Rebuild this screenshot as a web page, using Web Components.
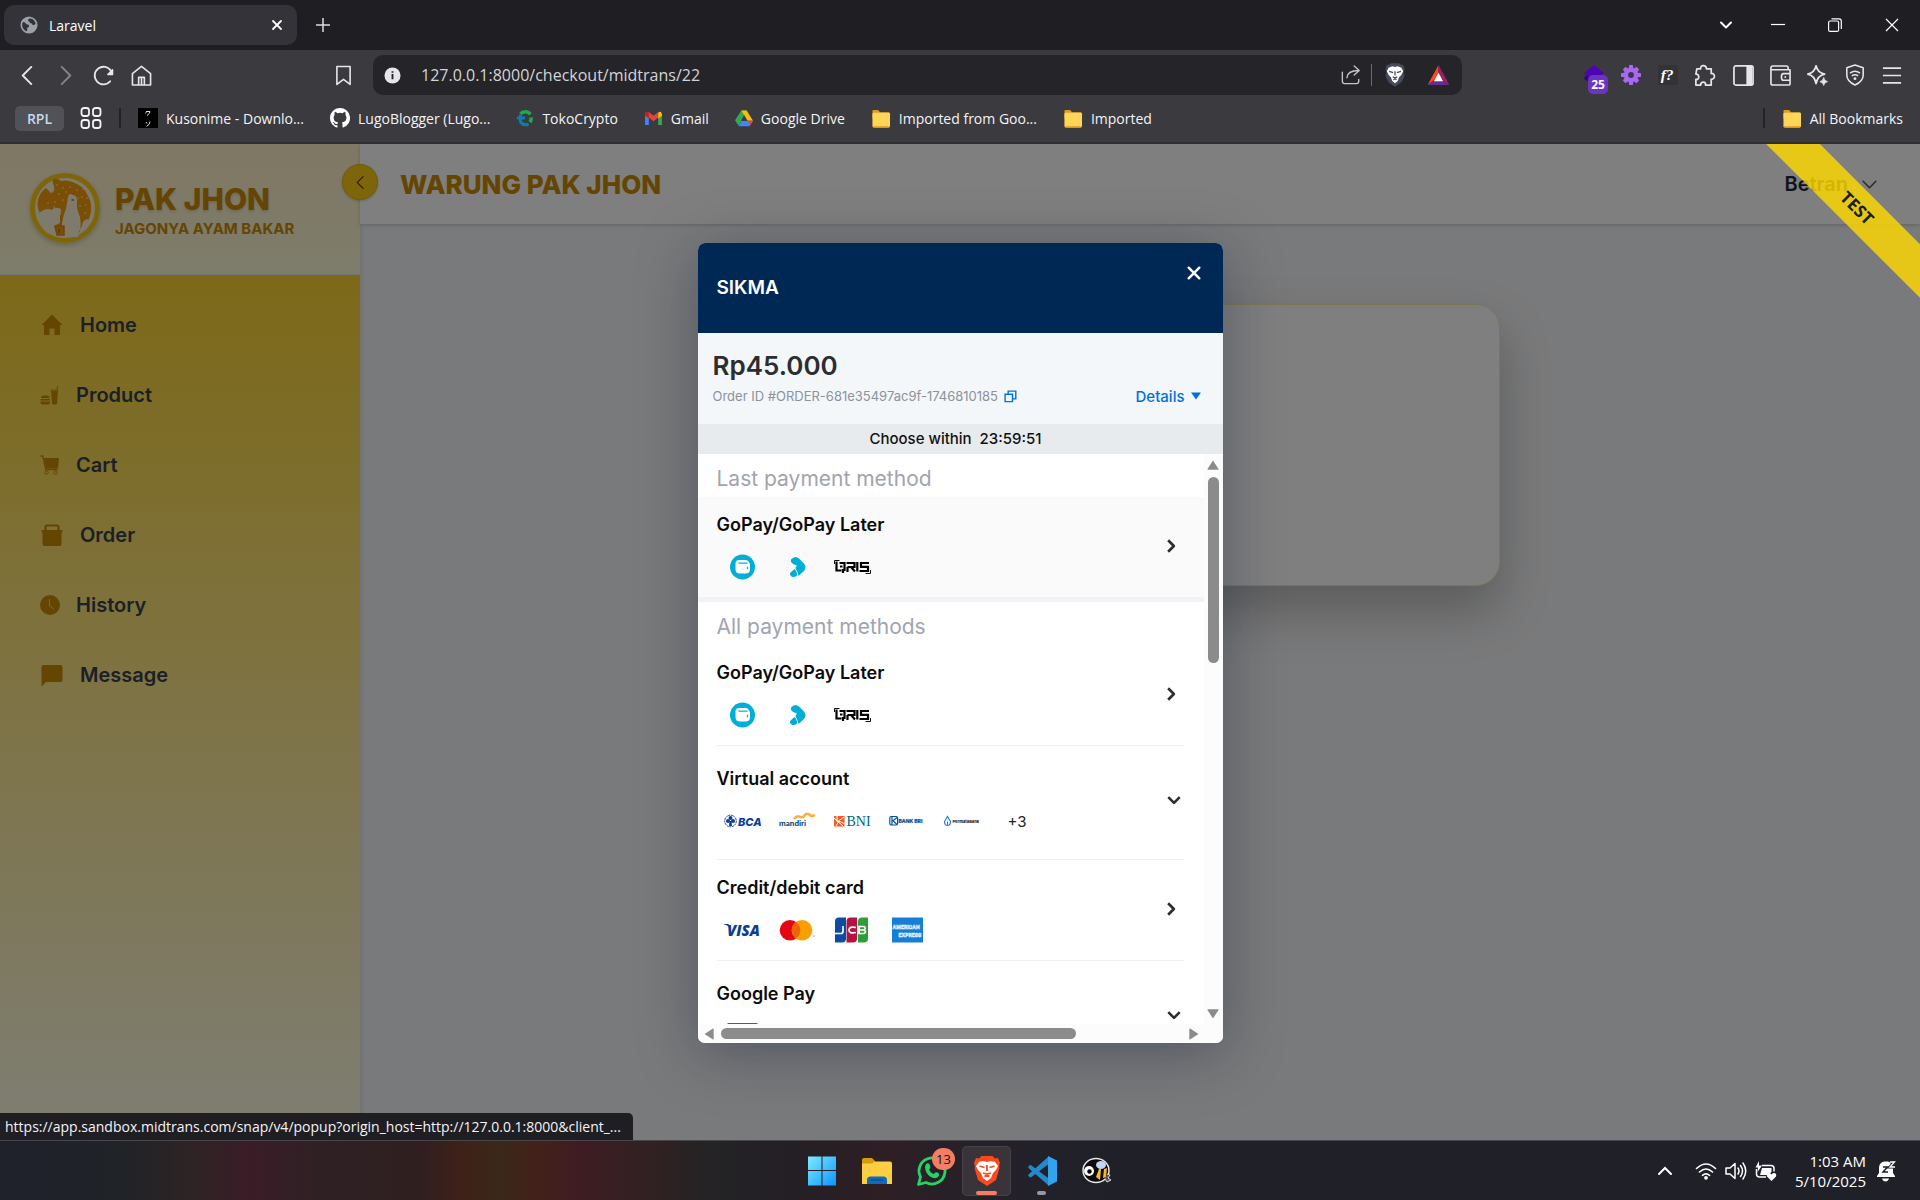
<!DOCTYPE html>
<html lang="en">
<head>
<meta charset="utf-8">
<title>Laravel</title>
<style>
  :root { --ui: "Open Sans", "Noto Sans", sans-serif; --brand: Inter, "Noto Sans", sans-serif; }
  html, body { margin: 0; height: 100%; overflow: hidden; }
  body { font-family: var(--ui); background: #1f1e23; }
</style>
</head>
<body>
<desktop-screen></desktop-screen>
<script>
const ICONS = {
  globe: ['0 0 20 20', '<circle cx="10" cy="10" r="9.500" fill="#9ba1a8"/><path d="M3 7c2-1 3 1 4 2s3 0 3 2-2 1-2 3 0 3-1 3C3 15 1.500 11 3 7zM10 3c-1 1-2 2 0 3s0 2 2 2 1 2 3 2 1-1 2.500-1C17 6 14 2 10 3z" fill="#34333a"/>'],
  close: ['0 0 12 12', '<path d="M2 2l8 8M10 2l-8 8" stroke="currentColor" stroke-width="1.800" stroke-linecap="round"/>'],
  thinclose: ['0 0 14 14', '<path d="M1 1l12 12M13 1L1 13" stroke="currentColor" stroke-width="1.200"/>'],
  plus: ['0 0 14 14', '<path d="M7 0v14M0 7h14" stroke="currentColor" stroke-width="1.500"/>'],
  chevdown: ['0 0 14 14', '<path d="M2 4.500l5 5 5-5" fill="none" stroke="currentColor" stroke-width="2" stroke-linecap="round" stroke-linejoin="round"/>'],
  chevthin: ['0 0 16 16', '<path d="M2 5l6 6 6-6" fill="none" stroke="currentColor" stroke-width="1.400" stroke-linecap="round" stroke-linejoin="round"/>'],
  minimize: ['0 0 14 14', '<path d="M0 6.500h14" stroke="currentColor" stroke-width="1.200"/>'],
  restore: ['0 0 14 14', '<rect x=".6" y="3" width="10" height="10.400" rx="1.500" fill="none" stroke="currentColor" stroke-width="1.200"/><path d="M3.500 .8H11q2.300 0 2.300 2.300V11" fill="none" stroke="currentColor" stroke-width="1.200"/>'],
  back: ['0 0 20 20', '<path d="M14 1L5 10l9 9" fill="none" stroke="currentColor" stroke-width="2" stroke-linecap="round" stroke-linejoin="round"/>'],
  forward: ['0 0 20 20', '<path d="M6 1l9 9-9 9" fill="none" stroke="currentColor" stroke-width="2" stroke-linecap="round" stroke-linejoin="round"/>'],
  reload: ['0 0 22 22', '<path d="M18 17A9.200 9.200 0 1 1 19 6.500" fill="none" stroke="currentColor" stroke-width="1.900" stroke-linecap="round"/><path d="M20.500 5v5h-5z" fill="currentColor" stroke="currentColor" stroke-width="1.500" stroke-linejoin="round"/>'],
  home: ['0 0 22 22', '<path d="M1.500 9L11 1.500 20.500 9v12H1.500z M8 21v-8h6v8M11 21v-8" fill="none" stroke="currentColor" stroke-width="1.700" stroke-linejoin="round"/>'],
  bookmark: ['0 0 18 22', '<path d="M2 1.500h14v19l-7-5.500-7 5.500z" fill="none" stroke="currentColor" stroke-width="1.700" stroke-linejoin="round"/>'],
  info: ['0 0 18 18', '<circle cx="9" cy="9" r="8.500" fill="#e6e5ea"/><path d="M9 7.500V13M9 4.500v1.600" stroke="#252429" stroke-width="2"/>'],
  share: ['0 0 22 22', '<path d="M1.500 8v10q0 2.500 2.500 2.500h13q2.500 0 2.500-2.500v-2M6.500 14q.5-8 13-8M14.500 1l5.500 5-5.500 5" fill="none" stroke="currentColor" stroke-width="1.500" stroke-linecap="round" stroke-linejoin="round"/>'],
  lion: ['0 0 22 26', '<path d="M6.500 0h9L17 1.500l3 .5 1.500 5-1 4 1 3L18 21l-7 5-7-5L.5 14l1-3-1-4L2 2l3-.5z" fill="#474a5f"/><path d="M4 5l4-1.500 3 .8 3-.8L18 5l2 4-2 4-2.500 2.500-1.500 4L11 22l-3-2.500-1.500-4L4 13 2 9z" fill="#fff"/><path d="M4.500 9l4.500 1.300M17.500 9L13 10.300M11 9v4.500M8.500 15l2.500 1 2.500-1M9.300 18.200L11 17l1.700 1.200" stroke="#474a5f" stroke-width="1.400" fill="none"/>'],
  bat: ['0 0 24 22', '<path d="M12 0L0 22l12-9z" fill="#ff4724"/><path d="M12 0l12 22-12-9z" fill="#9e1f63"/><path d="M0 22h24l-12-9z" fill="#662d91"/><path d="M12 8.500L7 18h10z" fill="#fff"/>'],
  diamond: ['0 0 22 22', '<path d="M11 0l11 9-11 9L0 9z" fill="#4d04b5"/><path d="M2 11l9 7-3 3-8-6z" fill="#2b0780"/>'],
  gear: ['0 0 22 22', '<g fill="#a868f5"><circle cx="11" cy="11" r="7.800"/><path d="M9 0h4l.8 5H8.200zM9 22h4l.8-5H8.200zM0 9v4l5 .8V8.200zM22 9v4l-5 .8V8.200zM2 5l3-3 4 3-4 4zM20 17l-3 3-4-3 4-4zM2 17l3 3 4-3-4-4zM20 5l-3-3-4 3 4 4z"/></g><circle cx="11" cy="11" r="3.200" fill="#3b3a3f"/>'],
  fq: ['0 0 22 22', '<rect width="22" height="22" rx="2" fill="#333"/><text x="3" y="16" font-family="Liberation Serif" font-style="italic" font-weight="700" font-size="17" fill="#fff">f?</text>'],
  puzzle: ['0 0 24 24', '<path d="M4 5h4c-1-4 6-5 6 0h5v5c4-1 5 6 0 6v6h-6c1-4-5-4-5 0H3v-6c4 1 4-6 0-5.500z" fill="none" stroke="currentColor" stroke-width="1.800" stroke-linejoin="round"/>'],
  panel: ['0 0 22 22', '<rect x="1" y="1" width="20" height="20" rx="2" fill="none" stroke="currentColor" stroke-width="1.800"/><path d="M14 1h6v20h-6z" fill="currentColor"/>'],
  wallet: ['0 0 22 22', '<path d="M1 3q0-2 2-2h14q2 0 2 2v2h2v15q0 1-1 1H3q-2 0-2-2zM1 5h19M21 9h-7q-2 0-2 3.500t2 3.500h7" fill="none" stroke="currentColor" stroke-width="1.700" stroke-linejoin="round"/><circle cx="16" cy="12.500" r="1" fill="currentColor"/>'],
  sparkle: ['0 0 22 22', '<path d="M9.500 .8Q11 8 18.500 9.500 11 11 9.500 19.500 8 11 .8 9.500 8 8 9.500 .8z" fill="none" stroke="currentColor" stroke-width="1.800" stroke-linejoin="round"/><path d="M17.500 13q.5 3.500 4 4.500-3.500.5-4 4-.5-3.500-4-4 3.500-1 4-4.500z" fill="currentColor" stroke="currentColor" stroke-width=".8"/>'],
  vpn: ['0 0 22 24', '<path d="M11 1l9 3v8q0 7-9 11Q2 19 2 12V4z" fill="none" stroke="currentColor" stroke-width="1.700" stroke-linejoin="round"/><path d="M5.500 10q5.500-4 11 0M7.500 13q3.500-2.500 7 0" fill="none" stroke="currentColor" stroke-width="1.600"/><circle cx="11" cy="16" r="1.600" fill="currentColor"/>'],
  menu: ['0 0 22 20', '<path d="M1 2h20M1 10h20M1 18h20" stroke="currentColor" stroke-width="1.900"/>'],
  grid4: ['0 0 22 22', '<g fill="none" stroke="currentColor" stroke-width="1.800"><rect x="1.500" y="1" width="7.500" height="8" rx="2.500"/><rect x="13" y="1" width="7.500" height="8" rx="2.500"/><rect x="1.500" y="13" width="7.500" height="8" rx="2.500"/><rect x="13" y="13" width="7.500" height="8" rx="2.500"/></g>'],
  kuso: ['0 0 20 20', '<rect width="20" height="20" fill="#000"/><path d="M8 3.500h4q0 2-3 4M7.500 5.500l1-2M8 14l1 1.500M12 13.500q0 3-3.500 5" fill="none" stroke="#ddd" stroke-width="1"/>'],
  github: ['0 0 16 16', '<path fill="#fff" d="M8 0C3.580 0 0 3.580 0 8c0 3.540 2.290 6.530 5.470 7.590.4.070.55-.17.55-.38 0-.19-.01-.82-.01-1.490-2.010.37-2.530-.49-2.690-.94-.09-.23-.48-.94-.82-1.130-.28-.15-.68-.52-.01-.53.63-.01 1.080.58 1.230.82.72 1.210 1.870.87 2.330.66.07-.52.28-.87.51-1.070-1.780-.2-3.640-.89-3.640-3.950 0-.87.31-1.590.82-2.150-.08-.2-.36-1.020.08-2.120 0 0 .67-.21 2.200.82a7.600 7.600 0 0 1 4 0c1.530-1.040 2.200-.82 2.200-.82.44 1.100.16 1.920.08 2.120.51.56.82 1.270.82 2.150 0 3.070-1.870 3.750-3.650 3.950.29.25.54.73.54 1.480 0 1.070-.01 1.930-.01 2.200 0 .21.15.46.55.38A8 8 0 0 0 8 0z"/>'],
  toko: ['0 0 20 20', '<path d="M5 5.500A7 7 0 0 1 16 6M17 9.500q0 3-1.500 5" fill="none" stroke="#21a84a" stroke-width="4"/><path d="M1 10h9M5 6v8q3 5 9 3" fill="none" stroke="#0a7db3" stroke-width="3.400"/>'],
  gmail: ['0 0 20 16', '<path d="M1 3v12h4V7z" fill="#4285f4"/><path d="M19 3v12h-4V7z" fill="#34a853"/><path d="M1 2.500q2-3 4.500-1L10 5l4.500-3.500L15 7l-5 4-5-4-4-2z" fill="#ea4335"/><path d="M15 1.500q3-2 4 1.500v2l-4 3z" fill="#fbbc04"/><path d="M1 3v2l4 3V1.500Q2-.5 1 3z" fill="#c5221f"/>'],
  drive: ['0 0 20 18', '<path d="M7 0h6L4 17 0 11z" fill="#34a853"/><path d="M7 0h6l7 11.500h-6z" fill="#fbbc04"/><path d="M4 17.500L7 11.500h13l-4 6z" fill="#4285f4"/><path d="M14 11.500h6l-3 5z" fill="#ea4335"/><path d="M10 6l-3 5.500h6.500z" fill="#3b3a3f"/>'],
  folder: ['0 0 20 20', '<path d="M1 2q0-1 1-1h5l2 2.500h9q1 0 1 1V10H1z" fill="#d9a01f"/><rect x="1" y="4" width="18.500" height="15.500" rx="1.500" fill="#ffd659"/><path d="M1 18q0 1.500 1.500 1.500H18q1.500 0 1.500-1.500z" fill="#e8a92e"/>'],
  rooster: ['0 0 70 70', '<circle cx="35" cy="35" r="32.500" fill="#fdf6d8" stroke="#facc15" stroke-width="5"/><path d="M23 6q5-1 8 2 8-2 16 3 7 3 11 12 4 7 3 16l-3 10q-6 10-17 15-4-5-8-2-13-1-21-18-6-9-4-17 2-8 8-12l5 5q4-1 3-7-2-3-1-7z" fill="#f59e0b"/><path d="M8 41q8-7 14-4 2-4 9-1l-1 14-4 2v10q-10 0-15-9zM38 24q1-5 5-2 4 0 4 6-1 7 3 16 2 12-2 20H30q-2-8 2-14 2-10 4-14 1-6 2-12zM61 47q-8-3-9 6l-5 9q11-5 14-15z" fill="#fdf6d8"/><path d="M25 53h9v9h-7zM31 42v12" fill="#f59e0b" stroke="#e28c0a" stroke-width="1.500"/><path d="M41.500 27h2.500M29 56v4" stroke="#b97309" stroke-width="1.500"/><path d="M27 12h.1M33 15h.1M29 21h.1M40 14h.1M47 17h.1M52 24h.1M56 32h.1M50 33h.1M55 40h.1M33 27h.1M25 29h.1M18 30h.1M24 34h.1M53 16h.1M48 25h.1M57 25h.1M36 19h.1" stroke="#fdf6d8" stroke-width="1.400" stroke-linecap="round"/>'],
  navhome: ['0 0 24 24', '<path d="M12 1.500L22.500 12h-2.500v10h-5.500v-6.500h-5V22H4V12H1.500z" fill="currentColor"/>'],
  navproduct: ['0 0 20 20', '<path d="M1 13q0-2.500 2.500-2.500h3.500Q9.500 10.500 9.500 13zM.5 14h9.500v1.600H.5zM.5 16.500h9.500v1q0 2-2 2H2.500q-2 0-2-2zM11 6h7l-1 12.500q-.1 1-1 1h-3q-.9 0-1-1zM10.500 4.500h6l.5-3 1.500-1 .3.800-1 .7-.3 2.500h.8v1h-8z" fill="currentColor"/>'],
  navcart: ['0 0 20 20', '<path d="M4 3h15l-1 10.500H6z" fill="currentColor"/><path d="M.3 1h2.500l3 13.500H17.500" fill="none" stroke="currentColor" stroke-width="1.400"/><circle cx="6.500" cy="17.500" r="1.700" fill="none" stroke="currentColor"/><circle cx="15.500" cy="17.500" r="1.700" fill="none" stroke="currentColor"/>'],
  navorder: ['0 0 24 24', '<path d="M5.500 8V4q0-1.500 1.500-1.500h10q1.500 0 1.500 1.500v4" fill="none" stroke="currentColor" stroke-width="2.200"/><path d="M1.500 7h21v2.300H21.500v11.700q0 2-2 2h-15q-2 0-2-2V9.300H1.500z" fill="currentColor"/>'],
  navhistory: ['0 0 20 20', '<circle cx="10" cy="10" r="10" fill="currentColor"/><path d="M9.500 4v7l4.500 3" fill="none" stroke="#fbe27a" stroke-width="1" opacity=".8"/>'],
  navmessage: ['0 0 24 24', '<path d="M1.500 4q0-2 2-2h17q2 0 2 2v13q0 2-2 2H6l-4.500 4.500z" fill="currentColor"/>'],
  copy: ['0 0 14 14', '<path d="M1.200 4.500h8v8h-8zM4.500 4.500V1.200h8.200v8.300H9.200" fill="none" stroke="#0070dc" stroke-width="1.500"/>'],
  triangle: ['0 0 10 8', '<path d="M0 .5h10L5 7.500z" fill="currentColor"/>'],
  chevright: ['0 0 14 14', '<path d="M4.500 2L9.500 7l-5 5" fill="none" stroke="currentColor" stroke-width="2.300" stroke-linejoin="round"/>'],
  chevbold: ['0 0 14 14', '<path d="M2 4.500l5 5 5-5" fill="none" stroke="currentColor" stroke-width="2.300" stroke-linejoin="round"/>'],
  gopay: ['0 0 37 26', '<circle cx="18.500" cy="13" r="12.500" fill="#00aed6"/><path d="M11.500 9.500q0-3.500 3.500-3.500h6.500q3 0 3.300 2.500 1.200.5 1.200 2v4.500q0 4.500-4.500 4.500h-5.500q-4.500 0-4.500-4.500z" fill="#fff"/><path d="M14.500 9.200h9M23.500 12.800v2.400" stroke="#00aed6" stroke-width="1.300"/>'],
  paylater: ['0 0 37 26', '<path d="M12 5.500q4-4.500 8-1l5 5q3 4 0 7.500l-5.500 5q-.5-4-2.500-6.500-1-2 1-4-4-.500-6-3.500z" fill="#00aed6"/><path d="M11 19l4.500-4q3 3 2.500 6.500-3 2.500-5.500 1-2-1.500-1.500-3.500z" fill="#00aed6"/>'],
  qris: ['0 0 37 26', '<path d="M.5 10V6.500h5M36.500 16v3.500h-5" fill="none" stroke="#111" stroke-width="1"/><path d="M2.500 7.500v9h5M5.500 9h5v8M6 12.500h2.500M9 15v4M12.500 9h8v4h-7M13.500 13v5M17 13l4 4.500M23.300 8v9.500M35 9h-8v3.800h7V17h-8.500" fill="none" stroke="#000" stroke-width="2.200"/>'],
  bca: ['0 0 37 26', '<circle cx="6.500" cy="13" r="5.800" fill="#fff" stroke="#0a4094" stroke-dasharray="2 .7"/><g fill="#0a3e97"><circle cx="6.500" cy="10" r="2"/><circle cx="4" cy="13" r="2"/><circle cx="9" cy="13" r="2"/><path d="M5.500 13h2l.5 5H5z"/></g><text x="14" y="17.500" font-family="Inter" font-weight="800" font-style="italic" font-size="11" fill="#0a3e97">BCA</text>'],
  mandiri: ['0 0 37 26', '<path d="M15 11q3-4 6-2 3 1 5-2t6 1q2 0 4-1" fill="none" stroke="#fbb040" stroke-width="2.600"/><text x="0" y="18" font-family="Lato" font-weight="900" font-size="8" fill="#0a4a7c">mandiri</text>'],
  bni: ['0 0 37 26', '<rect y="8" width="10.500" height="10.500" fill="#f15a23"/><path d="M0 10l9 8M3 8v6l7-5M2 18l3-5 6 3" stroke="#fff" stroke-width="1" fill="none"/><text x="12.500" y="18.200" font-family="Liberation Serif" font-size="14" fill="#006577">BNI</text>'],
  bri: ['0 0 37 26', '<rect x=".8" y="8.500" width="7.800" height="8.500" rx="1.500" fill="none" stroke="#00529c" stroke-width="1.200"/><path d="M3 9v8M8 9.500l-4 3.300L8 16.500" fill="none" stroke="#00529c" stroke-width="1.200"/><text x="9.500" y="15" font-family="Inter" font-weight="800" font-size="5" fill="#00529c" stroke="#00529c" stroke-width=".2">BANK BRI</text>'],
  permata: ['0 0 37 26', '<path d="M3.500 8.500l3 5q0 4-3 4t-3-4z" fill="none" stroke="#2880e8" stroke-width="1.200"/><path d="M3.500 17.500v-4" stroke="#2880e8"/><text x="8.500" y="15" font-family="Inter" font-weight="800" font-size="4" fill="#222">PermataBank</text>'],
  visa: ['0 0 37 26', '<text x="3" y="18.500" font-family="Open Sans" font-weight="800" font-style="italic" font-size="15" fill="#0e3d91">VISA</text><path d="M0 7h4.500l2 5q-2-4-6.500-4.500z" fill="#0e3d91"/>'],
  mastercard: ['0 0 37 26', '<circle cx="11" cy="13.200" r="10.300" fill="#e30613"/><circle cx="23" cy="13.200" r="10.300" fill="#f9a000"/><path d="M17 4.800a10.300 10.300 0 0 1 0 16.800 10.300 10.300 0 0 1 0-16.800z" fill="#ec6608"/><path d="M34 19h2" stroke="#f9a000" stroke-width="1"/>'],
  jcb: ['0 0 37 26', '<path d="M5 0.500h7v21q0 4-4 4H1v-21q0-4 4-4z" fill="#0c4da2"/><path d="M16.500.5h6.500v21q0 4-4 4h-6.500v-21q0-4 4-4z" fill="#b5123f"/><path d="M28 .5h6v21q0 4-4 4h-6v-21q0-4 4-4z" fill="#2f9e3a"/><path d="M1 16.500h6q2 0 2-2.500V9M22 10.500q-7-1.500-7 2.500t7 2.500M25 9.500v7h5q3-1.700 0-3.500 2.500-2 0-3.500zM25 13h5" fill="none" stroke="#fff" stroke-width="1.700"/>'],
  amex: ['0 0 37 26', '<path d="M3 0.500h31v25H3z" fill="#157ed6"/><g font-family="Inter" font-weight="700" font-size="5" fill="none" stroke="#e6f3ff" stroke-width=".55"><text x="3.500" y="12.200">AMERICAN</text><text x="9.500" y="19.500">EXPRESS</text></g>'],
  gpay: ['0 0 37 26', '<path d="M2 3Q3 .800 6 .800h25q3 0 4 2.200" fill="none" stroke="#444" stroke-width="1.400"/><rect x="1" y=".8" width="35" height="24" rx="6" fill="none" stroke="#666"/>'],
  windows: ['0 0 30 30', '<defs><linearGradient id="w" x1="0" y1="0" x2="1" y2="1"><stop offset="0" stop-color="#7cecff"/><stop offset="1" stop-color="#0c93ff"/></linearGradient></defs><path d="M1 .5h13.500V14H1zM15.500.5H29V14H15.500zM1 15h13.500v14.500H1zM15.500 15H29v14.500H15.500z" fill="url(#w)"/>'],
  explorer: ['0 0 30 30', '<path d="M0 4q0-2 2-2h8l3 3v6H0z" fill="#d99a0b"/><path d="M0 7.500h10l2.500-2H28q2 0 2 2V28H0z" fill="#fccf43"/><path d="M5 28v-4q0-3.500 3.500-3.500h13Q25 20.500 25 24v4z" fill="#0f6cbd"/><path d="M9 24h12" stroke="#0a4b86" stroke-width="1.200"/>'],
  whatsapp: ['0 0 30 30', '<path d="M1.500 28.500l2-7.500A13 13 0 1 1 9 26.500z" fill="none" stroke="#25d366" stroke-width="2.800" stroke-linejoin="round"/><path d="M9 8q3-2 4 1.500t-1 3.500q1 4 5 5 1-2.500 3.500-1.500t1 4q-2 2.500-6 1.300Q10 19.500 8.500 14 7.500 10 9 8z" fill="#25d366"/>'],
  brave: ['0 0 26 30', '<path d="M7.500 0h11L21 2.500l3-.5 2 5-1 3.500.5 1.500L22 24l-9 6-9-6L.5 12 1 10.500 0 7l2-5 3 .5z" fill="#fb4a1d"/><path d="M5 6l4-1 4 1 4-1 4 1 3 4-2 4-3 3-2 5-4 3-4-3-2-5-3-3-2-4z" fill="#fff"/><path d="M5.500 10l5 1.500M20.500 10l-5 1.500M13 9v6M9 17l4 1 4-1M10.500 20.500l2.500-1.500 2.500 1.500" fill="none" stroke="#fb4a1d" stroke-width="1.800"/>'],
  vscode: ['0 0 30 30', '<path d="M21 1l8.500 4v20L21 29 2 12.500 1 11l2-2 1.500.5L23 23.500V7L4.500 21l-1.500.5-2-2L2 18z" fill="#2489ca"/><path d="M21 0l9 4.500v21L21 30z" fill="#33a3ee"/>'],
  bee: ['0 0 30 28', '<ellipse cx="14" cy="13.500" rx="13" ry="12" fill="#0b0b0b" stroke="#e8e8e8" stroke-width="1.500"/><path d="M14 20l3-8h2l-1 11zM21 21l1-9 3-1-1 9z" fill="#fdb62a"/><ellipse cx="19" cy="8" rx="5" ry="4" fill="#c3d5f5"/><circle cx="7" cy="14" r="5" fill="#fff"/><circle cx="7.500" cy="14.500" r="2.200" fill="#000"/><path d="M25 17l3 1-2 3 3 2-4 2-2-3" fill="#555" stroke="#ddd"/>'],
  chevup: ['0 0 16 16', '<path d="M2 11l6-6 6 6" fill="none" stroke="currentColor" stroke-width="2" stroke-linecap="round"/>'],
  wifi: ['0 0 22 20', '<path d="M1.500 7.500q9.500-9 19 0M4.500 11q6.500-6 13 0M7.500 14.300q3.500-3 7 0" fill="none" stroke="currentColor" stroke-width="1.600" stroke-linecap="round"/><circle cx="11" cy="16.800" r="1.900" fill="currentColor"/>'],
  volume: ['0 0 22 20', '<path d="M1 7h4l5-4.500v15L5 13H1z" fill="none" stroke="currentColor" stroke-width="1.500" stroke-linejoin="round"/><path d="M13 7q2 3 0 6M15.500 4.500q4 5.500 0 11M18 2q5.500 8 0 16" fill="none" stroke="currentColor" stroke-width="1.500" stroke-linecap="round"/>'],
  battery: ['0 0 22 20', '<path d="M7 4.500h9q3 0 3 3v3M1.500 8v5q0 3 3 3H11" fill="none" stroke="currentColor" stroke-width="1.500"/><path d="M7 7h9.500v4L13 14H5zM4 0L.5 6.500H3L2.500 11 7 4.500H4zM16.500 20l-4.500-4.500q-1-3.500 2-3.500 2 0 2.500 1.500.5-1.500 2.500-1.500 3 0 2 3.500z" fill="currentColor"/>'],
  bell: ['0 0 20 22', '<path d="M3 8q0-6 6-6.500h3Q17 3 17 8v5l2 3v1H1v-1l2-3zM6 18.500h7q-1 3-3.500 3T6 18.500z" fill="currentColor"/><path d="M7 7h4.500L7 12h5" fill="none" stroke="#1f2028" stroke-width="1.500"/><path d="M14 2h4.500L14 7h5" fill="none" stroke="#1f2028" stroke-width="3"/><path d="M14 2h4.500L14 7h5" fill="none" stroke="currentColor" stroke-width="1.300"/>'],
  arrowup: ['0 0 12 10', '<path d="M6 .5L11.500 9q.3.700-.5.700H1q-.8 0-.5-.7z" fill="#8b8b8b"/>'],
  arrowdown: ['0 0 12 10', '<path d="M6 9.500L.5 1Q.2.300 1 .3h10q.8 0 .5.700z" fill="#8b8b8b"/>'],
  arrowleft: ['0 0 10 12', '<path d="M.5 6L9 .5q.7-.3.700.5v10q0 .8-.7.500z" fill="#8b8b8b"/>'],
  arrowright: ['0 0 10 12', '<path d="M9.500 6L1 .5Q.3.200.3 1v10q0 .8.700.5z" fill="#8b8b8b"/>']
};

function define(name, css, html) {
  const tpl = document.createElement('template');
  tpl.innerHTML = `<style>*{box-sizing:border-box} button,input{font:inherit;color:inherit;border:0;padding:0;margin:0;background:none} a{color:inherit;text-decoration:none} ${css}</style>${html}`;
  customElements.define(name, class extends HTMLElement {
    constructor() {
      super();
      this.attachShadow({ mode: 'open' }).append(tpl.content.cloneNode(true));
    }
  });
}

customElements.define('ui-icon', class extends HTMLElement {
  connectedCallback() {
    if (this.shadowRoot) return;
    const [box, body] = ICONS[this.getAttribute('name')];
    const w = this.getAttribute('w') || 20, h = this.getAttribute('h') || w;
    this.attachShadow({ mode: 'open' }).innerHTML =
      `<style>:host{display:inline-flex;flex:none}svg{display:block}</style><svg width="${w}" height="${h}" viewBox="${box}" aria-hidden="true">${body}</svg>`;
  }
});

define('tab-strip', `
  :host{display:flex;align-items:center;height:50px;padding-left:4px;background:#1f1e23;color:#fff;font-size:14px}
  .tab{display:flex;align-items:center;width:293px;height:40px;padding:0 14px 0 16px;gap:11px;border-radius:10px;background:#34333a}
  .tab span{flex:1} button{display:grid;place-items:center}
  .new{width:52px;height:40px;color:#ddd} .gap{flex:1}
  .win{width:57px;height:50px} .list{width:46px;height:50px}`,
  `<div class="tab"><ui-icon name="globe" w="18"></ui-icon><span>Laravel</span><button aria-label="Close tab"><ui-icon name="close" w="12"></ui-icon></button></div>
   <button class="new" aria-label="New tab"><ui-icon name="plus" w="14"></ui-icon></button><div class="gap"></div>
   <button class="list" aria-label="Search tabs"><ui-icon name="chevdown" w="14"></ui-icon></button>
   <button class="win" aria-label="Minimize"><ui-icon name="minimize" w="14"></ui-icon></button>
   <button class="win" aria-label="Restore"><ui-icon name="restore" w="14"></ui-icon></button>
   <button class="win" aria-label="Close"><ui-icon name="thinclose" w="14"></ui-icon></button>`);

define('tool-bar', `
  :host{display:grid;grid-template-columns:373px 1fr 458px;align-items:center;height:50px;background:#3b3a3f;color:#e6e5ea}
  .l,.r,.u{display:flex;align-items:center} .l{padding:0 11px 0 8px} .l b{flex:1}
  button{display:grid;place-items:center;width:38px;height:38px} .dim{color:#85848a}
  .u{height:40px;border-radius:10px;background:#252429;padding:0 10px 0 11px;color:#c4c4ca}
  input{flex:1;min-width:0;height:40px;margin-left:20px;outline:0;font-size:16px;color:#d3d4d8}
  .u button{width:28px} .u i{width:1px;height:22px;background:#6a696f;margin:0 9px 0 6px} .u .b{margin-left:15px}
  .r{justify-content:flex-end;padding-right:10px} .r button{width:37px;position:relative} .r hr{width:2px;border:0;margin:0}
  .badge{position:absolute;left:13px;top:19px;width:20px;height:19px;border-radius:5px;background:#6d33c2;color:#fff;font-size:12px;font-weight:700;line-height:19px;text-align:center}`,
  `<div class="l"><button aria-label="Back"><ui-icon name="back" w="19"></ui-icon></button><button class="dim" aria-label="Forward"><ui-icon name="forward" w="19"></ui-icon></button><button aria-label="Reload"><ui-icon name="reload" w="21"></ui-icon></button><button aria-label="Home"><ui-icon name="home" w="21"></ui-icon></button><b></b><button aria-label="Bookmark this tab"><ui-icon name="bookmark" w="17" h="21"></ui-icon></button></div>
   <div class="u"><ui-icon name="info" w="17"></ui-icon><input aria-label="Address" value="127.0.0.1:8000/checkout/midtrans/22">
   <button aria-label="Share"><ui-icon name="share" w="20"></ui-icon></button><i></i><button aria-label="Shields"><ui-icon name="lion" w="20" h="24"></ui-icon></button><button class="b" aria-label="Rewards"><ui-icon name="bat" w="23" h="20"></ui-icon></button></div>
   <div class="r"><button aria-label="Extension"><ui-icon name="diamond" w="20"></ui-icon><span class="badge">25</span></button><button aria-label="Settings extension"><ui-icon name="gear" w="20"></ui-icon></button><button aria-label="Font finder"><ui-icon name="fq" w="20"></ui-icon></button><button aria-label="Extensions"><ui-icon name="puzzle" w="23"></ui-icon></button><hr><button aria-label="Sidebar"><ui-icon name="panel" w="21"></ui-icon></button><button aria-label="Wallet"><ui-icon name="wallet" w="21"></ui-icon></button><button aria-label="Assistant"><ui-icon name="sparkle" w="21"></ui-icon></button><button aria-label="VPN"><ui-icon name="vpn" w="20" h="22"></ui-icon></button><button aria-label="Menu"><ui-icon name="menu" w="20" h="19"></ui-icon></button></div>`);

define('bookmark-item', `:host{display:block;white-space:nowrap} a{display:flex;align-items:center;gap:8px}`,
  `<a href="#"><slot name="icon"></slot><slot></slot></a>`);

define('bookmark-bar', `
  :host{display:flex;align-items:center;gap:26px;height:44px;padding:0 17px 6px 15px;background:#3b3a3f;border-bottom:2px solid #302f35;color:#f4f4f6;font-size:14px}
  .rpl{width:49px;height:25px;border-radius:5px;background:#505257;font-weight:600;color:#c7d8ee}
  .apps{display:grid;margin-left:-10px} i{width:2px;height:20px;border-radius:1px;background:#222126;margin:0 -9px} .s{flex:1}`,
  `<button class="rpl">RPL</button><button class="apps" aria-label="Tab groups"><ui-icon name="grid4" w="22"></ui-icon></button><i></i>
   <bookmark-item><ui-icon slot="icon" name="kuso" w="20"></ui-icon>Kusonime - Downlo...</bookmark-item>
   <bookmark-item><ui-icon slot="icon" name="github" w="20"></ui-icon>LugoBlogger (Lugo...</bookmark-item>
   <bookmark-item><ui-icon slot="icon" name="toko" w="18"></ui-icon>TokoCrypto</bookmark-item>
   <bookmark-item><ui-icon slot="icon" name="gmail" w="19" h="15"></ui-icon>Gmail</bookmark-item>
   <bookmark-item><ui-icon slot="icon" name="drive" w="18" h="17"></ui-icon>Google Drive</bookmark-item>
   <bookmark-item><ui-icon slot="icon" name="folder" w="20" h="19"></ui-icon>Imported from Goo...</bookmark-item>
   <bookmark-item><ui-icon slot="icon" name="folder" w="20" h="19"></ui-icon>Imported</bookmark-item>
   <div class="s"></div><i></i>
   <bookmark-item><ui-icon slot="icon" name="folder" w="20" h="19"></ui-icon>All Bookmarks</bookmark-item>`);

define('nav-item', `
  :host{display:block;height:70px} a{display:flex;align-items:center;height:100%;padding-left:40px;gap:16px;font-size:20px;font-weight:600;color:#374151}
  ::slotted(ui-icon){color:#ca8a04}`,
  `<a href="#"><slot name="icon"></slot><slot></slot></a>`);

define('site-sidebar', `
  :host{display:flex;flex-direction:column;width:360px;flex:none;background:linear-gradient(#facc15,#fefce8);font-family:var(--brand)}
  .brand{display:flex;align-items:center;gap:15px;height:131px;padding:0 30px 2px;background:linear-gradient(#fff0ca,#fdf9d6);border-bottom:1px solid #e5e7eb;color:#ca8a04}
  h2{margin:0;font-size:30px;line-height:32px;font-weight:800;text-shadow:0 2px 3px #0002;white-space:nowrap} p{margin:0;font-size:15px;line-height:28px;font-weight:700;white-space:nowrap}
  .logo{display:flex;border-radius:50%;box-shadow:0 2px 5px #0003} .t{padding-top:10px} nav{padding-top:15px}`,
  `<div class="brand"><span class="logo"><ui-icon name="rooster" w="70"></ui-icon></span><div class="t"><h2>PAK JHON</h2><p>JAGONYA AYAM BAKAR</p></div></div>
   <nav><nav-item><ui-icon slot="icon" name="navhome" w="24"></ui-icon>Home</nav-item>
   <nav-item><ui-icon slot="icon" name="navproduct" w="20"></ui-icon>Product</nav-item>
   <nav-item><ui-icon slot="icon" name="navcart" w="20"></ui-icon>Cart</nav-item>
   <nav-item><ui-icon slot="icon" name="navorder" w="24"></ui-icon>Order</nav-item>
   <nav-item><ui-icon slot="icon" name="navhistory" w="20"></ui-icon>History</nav-item>
   <nav-item><ui-icon slot="icon" name="navmessage" w="24"></ui-icon>Message</nav-item></nav>`);

define('site-header', `
  :host{display:flex;align-items:center;justify-content:space-between;position:relative;height:80px;padding:0 42px 0 40px;background:#fff;box-shadow:0 1px 4px #0003;font-family:var(--brand)}
  h1{margin:0;font-size:26px;font-weight:800;color:#ca8a04} .user{display:flex;align-items:center;gap:13px;font-size:20px;font-weight:600;color:#1f2937} .user ui-icon{color:#4b5563}
  .fold{position:absolute;left:-18px;top:20px;width:36px;height:36px;border-radius:50%;background:#facc15;border:1px solid #eab308;display:grid;place-items:center;color:#78350f;box-shadow:0 1px 3px #0003}`,
  `<button class="fold" aria-label="Collapse sidebar"><ui-icon name="back" w="13"></ui-icon></button><h1>WARUNG PAK JHON</h1><button class="user">Betran<ui-icon name="chevthin" w="17"></ui-icon></button>`);

define('pay-method', `
  :host{display:block;padding:0 20px 0 19px}
  button{display:flex;align-items:center;justify-content:space-between;width:100%;padding:15px 0 17px;border-bottom:1px solid #eef0f2;text-align:left;color:#111}
  :host([last]) {background:#fafafa;border-bottom:5px solid #f1f3f6} :host([last]) button{border:0}
  :host([fold]) button{padding:20px 0 25px}
  .n{display:block;font-size:18px;line-height:26px;font-weight:600;white-space:nowrap;margin-bottom:16px;color:#0b0b0c}
  .i{display:flex;align-items:center;gap:18px;height:26px;padding-left:7px}
  .a,.d{place-items:center;height:24px;color:#2c2d31} .a{display:grid;width:26px} .d{display:none;width:20px}
  :host([fold]) .a{display:none} :host([fold]) .d{display:grid}`,
  `<button><span><span class="n"><slot name="title"></slot></span><span class="i"><slot></slot></span></span><span class="a"><ui-icon name="chevright" w="16"></ui-icon></span><span class="d"><ui-icon name="chevbold" w="16"></ui-icon></span></button>`);

define('pay-dialog', `
  :host{display:flex;flex-direction:column;width:525px;height:calc(100% - 194px);border-radius:7px;overflow:hidden;background:#fff;box-shadow:0 10px 60px #0a153059;font-family:var(--brand)}
  header{display:flex;justify-content:space-between;height:90px;flex:none;padding:0 23px 0 19px;background:#002855;color:#fff}
  h2{margin:auto 0;font-size:19px;line-height:28px;font-weight:600} header button{height:60px;width:14px;display:grid;place-items:center}
  .sum{height:91px;flex:none;background:#f3f7fa;padding:17px 22px 0 15px}
  .amt{font-size:26px;line-height:32px;font-weight:600;color:#2c2d31} .row{display:flex;align-items:center;justify-content:space-between;height:28px;font-size:13px;color:#8d929b}
  .id{display:flex;align-items:center;gap:6px} .det{display:flex;align-items:center;gap:6px;font-size:15px;font-weight:500;color:#0070dc}
  .time{display:flex;justify-content:center;gap:8px;height:30px;flex:none;padding-right:9px;background:#e8ebee;line-height:30px;font-size:15px;font-weight:500;color:#111}
  .body{flex:1;min-height:0;display:grid;grid-template:1fr 19px/1fr 19px} .list{overflow:hidden;min-height:0}
  h3{margin:0;padding:4px 0 0 19px;height:43px;line-height:42px;font-size:21px;font-weight:400;color:#a0a4b0}
  .more{width:37px;text-align:center;font-size:15px;color:#222}
  .v,.h{display:flex;align-items:center;background:#fcfcfc} .v{flex-direction:column;padding:6px 0 5px} .h{grid-column:1/3;padding:0 24px 0 6px}
  .track{flex:1;display:flex} .v .track{width:11px;flex-direction:column;padding-top:7px} .h .track{height:11px;padding-left:7px}
  .track i{background:#8b8b8b;border-radius:6px} .v i{height:35%} .h i{width:76%}`,
  `<header><h2>SIKMA</h2><button aria-label="Close"><ui-icon name="close" w="16"></ui-icon></button></header>
   <div class="sum"><div class="amt">Rp45.000</div><div class="row"><span class="id">Order ID #ORDER-681e35497ac9f-1746810185<ui-icon name="copy" w="13"></ui-icon></span><button class="det">Details<ui-icon name="triangle" w="10" h="8"></ui-icon></button></div></div>
   <div class="time"><span>Choose within</span><span>23:59:51</span></div>
   <div class="body"><div class="list">
     <h3>Last payment method</h3>
     <pay-method last><span slot="title">GoPay/GoPay Later</span><ui-icon name="gopay" w="37" h="26"></ui-icon><ui-icon name="paylater" w="37" h="26"></ui-icon><ui-icon name="qris" w="37" h="26"></ui-icon></pay-method>
     <h3>All payment methods</h3>
     <pay-method><span slot="title">GoPay/GoPay Later</span><ui-icon name="gopay" w="37" h="26"></ui-icon><ui-icon name="paylater" w="37" h="26"></ui-icon><ui-icon name="qris" w="37" h="26"></ui-icon></pay-method>
     <pay-method fold><span slot="title">Virtual account</span><ui-icon name="bca" w="37" h="26"></ui-icon><ui-icon name="mandiri" w="37" h="26"></ui-icon><ui-icon name="bni" w="37" h="26"></ui-icon><ui-icon name="bri" w="37" h="26"></ui-icon><ui-icon name="permata" w="37" h="26"></ui-icon><span class="more">+3</span></pay-method>
     <pay-method><span slot="title">Credit/debit card</span><ui-icon name="visa" w="37" h="26"></ui-icon><ui-icon name="mastercard" w="37" h="26"></ui-icon><ui-icon name="jcb" w="37" h="26"></ui-icon><ui-icon name="amex" w="37" h="26"></ui-icon></pay-method>
     <pay-method fold><span slot="title">Google Pay</span><ui-icon name="gpay" w="37" h="26"></ui-icon></pay-method>
   </div>
   <div class="v"><ui-icon name="arrowup" w="12" h="10"></ui-icon><div class="track"><i></i></div><ui-icon name="arrowdown" w="12" h="10"></ui-icon></div>
   <div class="h"><ui-icon name="arrowleft" w="10" h="12"></ui-icon><div class="track"><i></i></div><ui-icon name="arrowright" w="10" h="12"></ui-icon></div></div>`);

define('web-page', `
  :host{display:flex;position:relative;flex:1;min-height:0;overflow:hidden}
  main{flex:1;display:flex;flex-direction:column;background:#f3f4f6;box-shadow:inset 6px 0 6px -6px #0002}
  .card{width:720px;height:282px;margin:80px auto 0;border-radius:24px;background:#fff;border:1px solid #f6ecb0;box-shadow:0 25px 50px 0 #00000040}
  .veil{position:absolute;inset:0;display:flex;align-items:center;justify-content:center;padding-top:2px;box-sizing:border-box;background:#00000080}
  .ribbon{position:absolute;top:45px;right:-87px;width:300px;height:38px;transform:rotate(45deg);background:#ffd900d0;color:#1c1c1c;font:700 17px/38px var(--ui);text-align:center}
  .status{position:absolute;left:0;bottom:0;height:27px;padding:0 12px 0 5px;border-radius:0 5px 0 0;background:#1f1e23;color:#f4f4f6;font-size:14px;line-height:27px;white-space:nowrap}`,
  `<site-sidebar></site-sidebar><main><site-header></site-header><div class="card"></div></main>
   <div class="veil"><pay-dialog></pay-dialog></div><div class="ribbon">TEST</div>
   <div class="status">https://app.sandbox.midtrans.com/snap/v4/popup?origin_host=http://127.0.0.1:8000&amp;client_...</div>`);

define('task-bar', `
  :host{display:grid;grid-template-columns:1fr auto 1fr;align-items:center;height:60px;border-top:1px solid #48464a;color:#fff;
   background:linear-gradient(90deg,#1f212b 0,#202328 6%,#2e2325 10%,#3a1c27 13%,#2e2124 17%,#301f1f 22%,#3f2118 24%,#3a2819 26%,#43211a 28%,#3f1c22 30%,#302122 34%,#242325 37%,#231f25 41%,#2e1f24 46%,#25212a 51%,#1f2028 58%)}
  .apps{display:flex;gap:6px;padding-right:2px} .apps button{display:grid;place-items:center;position:relative;width:49px;height:50px;border-radius:5px}
  .on{background:#38343a;box-shadow:inset 0 0 0 1px #454147}
  .on::after,.run::after{content:"";position:absolute;left:14px;right:14px;bottom:1px;height:4px;border-radius:2px;background:#f47e63} .run::after{left:20px;right:20px;background:#9a989e}
  .badge{position:absolute;left:25px;top:2px;width:23px;height:22px;border-radius:11px;background:#f47e63;color:#111;font-size:13px;line-height:22px}
  .tray{display:flex;align-items:center;justify-content:flex-end;padding-right:24px} .tray ui-icon{margin-left:8px} .tray ui-icon:first-child{margin-right:14px}
  time{margin:0 10px 0 18px;text-align:right;font-size:15px;line-height:20px} .tray time+ui-icon{margin-left:0}`,
  `<span></span><div class="apps"><button aria-label="Start"><ui-icon name="windows" w="30"></ui-icon></button><button aria-label="File Explorer"><ui-icon name="explorer" w="30"></ui-icon></button><button aria-label="WhatsApp"><ui-icon name="whatsapp" w="30"></ui-icon><span class="badge">13</span></button><button class="on" aria-label="Brave"><ui-icon name="brave" w="26" h="30"></ui-icon></button><button class="run" aria-label="Visual Studio Code"><ui-icon name="vscode" w="30"></ui-icon></button><button aria-label="Bee"><ui-icon name="bee" w="30" h="28"></ui-icon></button></div>
   <div class="tray"><ui-icon name="chevup" w="16"></ui-icon><ui-icon name="wifi" w="22" h="20"></ui-icon><ui-icon name="volume" w="22" h="20"></ui-icon><ui-icon name="battery" w="22" h="20"></ui-icon><time>1:03 AM<br>5/10/2025</time><ui-icon name="bell" w="20" h="22"></ui-icon></div>`);

define('desktop-screen', `:host{display:flex;flex-direction:column;height:100vh}`,
  `<tab-strip></tab-strip><tool-bar></tool-bar><bookmark-bar></bookmark-bar><web-page></web-page><task-bar></task-bar>`);
</script>
</body>
</html>
